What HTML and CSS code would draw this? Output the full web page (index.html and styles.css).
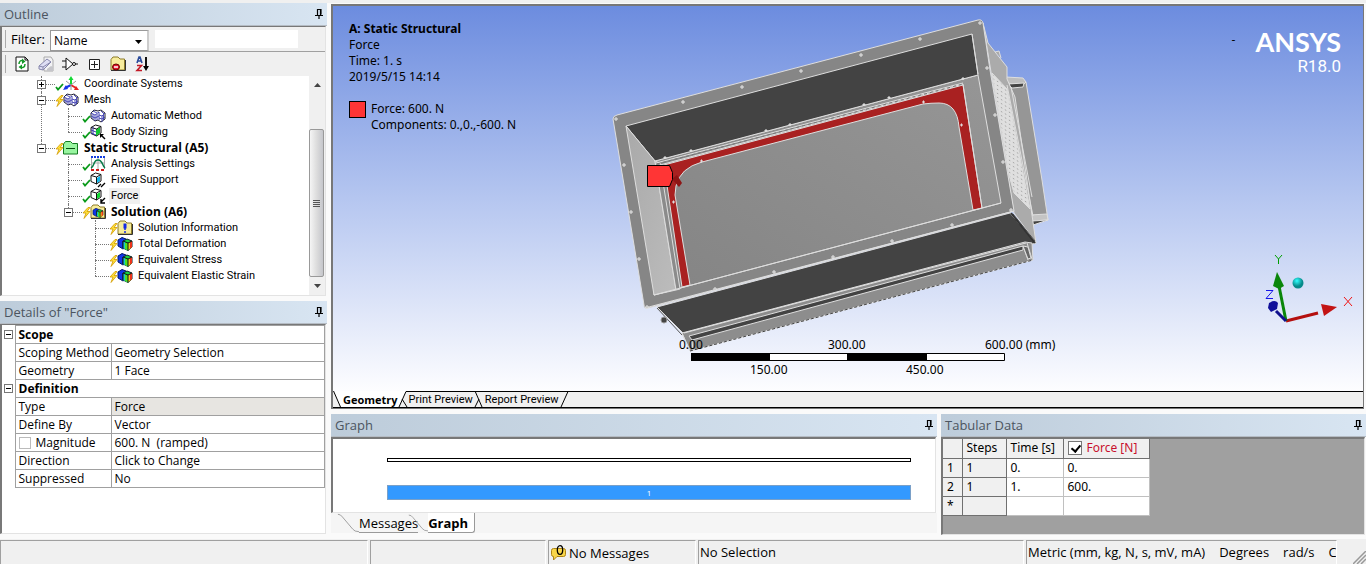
FILE: index.html
```
<!DOCTYPE html>
<html lang="en">
<head>
<meta charset="utf-8">
<title>Static Structural</title>
<link rel="stylesheet" href="styles.css">
</head>
<body>
<svg class="defs" aria-hidden="true">
  <defs>
    <symbol id="pin" viewBox="0 0 8 10"><path d="M2 .5h4v5M2.500 0v6M5.500 0v6M0 6.500h8M4 6v4" fill="none" stroke="#000" stroke-width="1.200"/></symbol>
    <symbol id="tick" viewBox="0 0 10 10"><path d="M1 6l2 2.500L8 3" fill="none" stroke="#0a9a1a" stroke-width="1.800"/></symbol>
    <symbol id="bolt" viewBox="0 0 9 12"><path d="M6 .5L1 6h3l-2 5.500L8 4.500H5L8 .5z" fill="#ffe23c" stroke="#d39a00" stroke-width=".8"/></symbol>
    <symbol id="folder" viewBox="0 0 16 15"><path d="M1 14V3.500L3 1h5l2 2h4.500v11z" fill="#f7ec9c" stroke="#8c7a28"/><path d="M1 14.500h14.500V4" fill="none" stroke="#333"/></symbol>
    <symbol id="cube" viewBox="0 0 12 13"><path d="M1 3.500L5.500 1 11 2.500v6.500L6.500 12 1 9.500z" fill="#fff" stroke="#111"/><path d="M1 3.500l5.500 1.500L11 2.500M6.500 5v7" fill="none" stroke="#111"/></symbol>
    <symbol id="meshcube" viewBox="0 0 16 14"><path d="M1 4l3-3 4 1 3-1 4 3v6l-4 3-3-2-3 1-4-3z" fill="#fff" stroke="#223"/><path d="M1 4l4 2 4-3M5 6v6M3 2l4 2M3 5v5M7 5v6M1 7l4 2 4-2M9 3v3l3 1 3-3M12 7v6M9 6v5M11 2l3 3M13.500 6v5M9 9l3 1 3-2" fill="none" stroke="#3a3ab0" stroke-width=".9"/></symbol>
    <symbol id="result" viewBox="0 0 16 14"><path d="M1 3l4-2.500L9 2v8l-3 2-5-3z" fill="#1236e8" stroke="#001a66"/><path d="M6 4l4-2 5 2v6l-4 3.500-5-2.500z" fill="#18d23c" stroke="#123"/><path d="M6 4l5 2v7.500L6 11z" fill="#12c8d8"/><path d="M8 5l3 1v7.500L8 12z" fill="#4de321"/><path d="M11 6l4-2v6l-4 3.500z" fill="#f4c81b"/><path d="M13 5l2-1v6l-2 1.500z" fill="#ef331b"/><path d="M6 4l5 2 4-2M11 6v7.500M6 4v7" fill="none" stroke="#111"/></symbol>
    <linearGradient id="plate" x1="0" y1="1" x2="1" y2="0"><stop offset="0" stop-color="#848484"/><stop offset="1" stop-color="#969696"/></linearGradient>
    <linearGradient id="wall" x1="0" y1="0" x2="1" y2="1"><stop offset="0" stop-color="#a9a9a9"/><stop offset="1" stop-color="#bcbcbc"/></linearGradient>
    <pattern id="holes" width="4" height="4" patternUnits="userSpaceOnUse" patternTransform="skewY(30)"><rect width="4" height="4" fill="#dfdfdf"/><path d="M1 1h1v1H1z" fill="#888"/></pattern>
    <radialGradient id="ball" cx=".4" cy=".3"><stop offset="0" stop-color="#3ff"/><stop offset="1" stop-color="#078a8a"/></radialGradient>
  </defs>
</svg>

<div class="app">
  <div class="topstrip"></div>
  <main class="workspace">
    <aside class="sidebar">
      <section class="pane outline">
        <header class="pane-title"><h2>Outline</h2><svg class="pin"><use href="#pin"/></svg></header>
        <div class="pane-body">
          <div class="filterbar">
            <span class="grip"></span>
            <label for="filter">Filter:</label>
            <div class="selectbox"><select id="filter"><option>Name</option></select><svg viewBox="0 0 7 4"><path d="M0 0h7L3.500 4z"/></svg></div>
            <input class="search" type="text" aria-label="Filter text">
          </div>
          <div class="toolbar">
            <span class="grip"></span>
            <button aria-label="Refresh"><svg viewBox="0 0 16 16"><path d="M2 1h9l3 3v11H2z" fill="#fff" stroke="#111"/><path d="M11 1v3h3" fill="none" stroke="#111"/><path d="M5 8c0-3 2-4 4-3M11 8c0 4-3 4-5 3" fill="none" stroke="#149a28" stroke-width="1.500"/><path d="M8 2.500l3.500 3L8 8zM8 8.500L4.500 11 8 13.500z" fill="#149a28"/></svg></button>
            <button aria-label="Erase"><svg viewBox="0 0 16 16"><path d="M6 1h7l2 3v11H6z" fill="#f2f2f4" stroke="#aaa"/><path d="M1 10l8-7 4 3-8 8-4-1z" fill="#dedef4" stroke="#8888ad"/><path d="M1 10l4 1 8-5M5 11v3" fill="none" stroke="#8888ad"/><path d="M9 13l4-3 2 1v4H9z" fill="#c5c5ca"/></svg></button>
            <button aria-label="Gate"><svg viewBox="0 0 16 16"><path d="M4 2v12l7-6zM0 5h4M0 11h4M13 8h3" fill="#fff" stroke="#111"/><circle cx="12" cy="8" r="1.500" fill="#fff" stroke="#111"/></svg></button>
            <button aria-label="Expand"><svg viewBox="0 0 16 16"><path d="M3.500 3.500h10v10h-10zM5 8.500h7M8.500 5v7" fill="#fff" stroke="#222"/></svg></button>
            <button aria-label="Hide folder"><svg viewBox="0 0 16 16"><use href="#folder" width="16" height="15"/><ellipse cx="6" cy="11" rx="3.500" ry="3" fill="#e5162c" stroke="#600"/><path d="M4 11h4" stroke="#fff" stroke-width="1.500"/></svg></button>
            <button aria-label="Sort"><svg viewBox="0 0 16 16"><path d="M3 7l2-6h1l2 6M4 5h3" fill="none" stroke="#2a4b9b" stroke-width="1.600"/><path d="M3 9.500h4.500L3 14.500h5" fill="none" stroke="#c21826" stroke-width="1.600"/><path d="M12 1v11" stroke="#111" stroke-width="2"/><path d="M9 10h6l-3 5z"/></svg></button>
          </div>
          <div class="treewrap">
            <ul class="tree">
              <li><div class="row"><i class="box plus"></i><svg class="ico"><use href="#tick" x="0" y="5" width="10" height="10"/><path d="M16 9V3" stroke="#13d835" stroke-width="2"/><path d="M13.500 4L16 0l2.500 4z" fill="#13d835"/><path d="M16 9l-6 3" stroke="#1534e8" stroke-width="2"/><path d="M8 14l3-5 2 4z" fill="#1534e8"/><path d="M16 9l5 3" stroke="#e82222" stroke-width="2"/><path d="M24 14l-5 0 2-4z" fill="#e82222"/><path d="M11 5l5 4 5-4M16 9v5" fill="none" stroke="#999"/></svg><span>Coordinate Systems</span></div></li>
              <li><div class="row"><i class="box"></i><svg class="ico"><use href="#meshcube" x="8" y="1" width="16" height="14"/><use href="#bolt" x="0" y="3" width="9" height="12"/></svg><span>Mesh</span></div>
                <ul>
                  <li><div class="row"><svg class="ico"><use href="#meshcube" x="8" y="1" width="16" height="14"/><use href="#tick" x="0" y="5" width="10" height="10"/></svg><span>Automatic Method</span></div></li>
                  <li><div class="row"><svg class="ico"><use href="#cube" x="8" y="0" width="12" height="13"/><path d="M14 6l4-3v6l-4 3z" fill="#12c832"/><path d="M9 6l5 2M11 3v7M9 9l5 2" stroke="#3a3ab0"/><path d="M23 15l-4-4" stroke="#000" stroke-width="1.500"/><path d="M18 10h4l-4 4z"/><use href="#tick" x="0" y="5" width="10" height="10"/></svg><span>Body Sizing</span></div></li>
                </ul></li>
              <li><div class="row"><i class="box"></i><svg class="ico"><path d="M8.500 14V4l2-2.500h5l2 2h5V14z" fill="#98f5a0" stroke="#137a20"/><path d="M11 8.500h9" stroke="#075010"/><use href="#bolt" x="0" y="3" width="9" height="12"/></svg><span class="bold">Static Structural (A5)</span></div>
                <ul>
                  <li><div class="row"><svg class="ico"><path d="M9.500 2v11M22.500 2v11M16 2v11M9 7h14" stroke="#aaa"/><path d="M9 12c4-2 2-8 7-8s4 6 7 8" fill="none" stroke="#087a48" stroke-width="1.500"/><path d="M9 1h14" stroke="#123be0" stroke-width="2" stroke-dasharray="2 1"/><path d="M9 14h14" stroke="#d01818" stroke-width="2" stroke-dasharray="3 2"/><use href="#tick" x="0" y="5" width="10" height="10"/></svg><span>Analysis Settings</span></div></li>
                  <li><div class="row"><svg class="ico"><use href="#cube" x="8" y="0" width="12" height="13"/><path d="M15 6l3-2v5l-3 2z" fill="#15b8ec"/><path d="M16 15l3-3M19 15l4-4" stroke="#000" stroke-width="1.300"/><use href="#tick" x="0" y="5" width="10" height="10"/></svg><span>Fixed Support</span></div></li>
                  <li><div class="row"><svg class="ico"><use href="#cube" x="8" y="0" width="12" height="13"/><path d="M15 6l3-2v5l-3 2z" fill="#12d832"/><path d="M23 10l-4 4M19 11v4h4" fill="none" stroke="#000" stroke-width="1.400"/><use href="#tick" x="0" y="5" width="10" height="10"/></svg><span class="selected">Force</span></div></li>
                  <li><div class="row"><i class="box"></i><svg class="ico"><use href="#folder" x="8" y="0" width="16" height="15"/><use href="#result" x="10" y="4" width="12" height="10"/><use href="#bolt" x="0" y="3" width="9" height="12"/></svg><span class="bold">Solution (A6)</span></div>
                    <ul>
                      <li><div class="row"><svg class="ico"><use href="#folder" x="8" y="0" width="16" height="15"/><path d="M16 3.500v5" stroke="#1329e6" stroke-width="3"/><path d="M16 8v2M16 11v2" stroke="#1329e6" stroke-width="1.500"/><use href="#bolt" x="0" y="3" width="9" height="12"/></svg><span>Solution Information</span></div></li>
                      <li><div class="row"><svg class="ico"><use href="#result" x="8" y="1" width="16" height="14"/><use href="#bolt" x="0" y="3" width="9" height="12"/></svg><span>Total Deformation</span></div></li>
                      <li><div class="row"><svg class="ico"><use href="#result" x="8" y="1" width="16" height="14"/><use href="#bolt" x="0" y="3" width="9" height="12"/></svg><span>Equivalent Stress</span></div></li>
                      <li><div class="row"><svg class="ico"><use href="#result" x="8" y="1" width="16" height="14"/><use href="#bolt" x="0" y="3" width="9" height="12"/></svg><span>Equivalent Elastic Strain</span></div></li>
                    </ul></li>
                </ul></li>
            </ul>
            <div class="scrollbar" aria-hidden="true">
              <svg class="arrow" viewBox="0 0 7 4"><path d="M0 4h7L3.500 0z"/></svg>
              <div class="track"><div class="thumb"><i></i><i></i><i></i><i></i></div></div>
              <svg class="arrow" viewBox="0 0 7 4"><path d="M0 0h7L3.500 4z"/></svg>
            </div>
          </div>
        </div>
      </section>

      <section class="pane details">
        <header class="pane-title"><h2>Details of "Force"</h2><svg class="pin"><use href="#pin"/></svg></header>
        <div class="pane-body">
          <table class="props">
            <colgroup><col class="c-gut"><col class="c-name"><col></colgroup>
            <tr><td class="gut"><i class="box"></i></td><th colspan="2">Scope</th></tr>
            <tr><td class="gut"></td><td>Scoping Method</td><td>Geometry Selection</td></tr>
            <tr><td class="gut"></td><td>Geometry</td><td>1 Face</td></tr>
            <tr><td class="gut"><i class="box"></i></td><th colspan="2">Definition</th></tr>
            <tr><td class="gut"></td><td>Type</td><td class="readonly">Force</td></tr>
            <tr><td class="gut"></td><td>Define By</td><td>Vector</td></tr>
            <tr><td class="gut"></td><td><label class="mag"><input type="checkbox">Magnitude</label></td><td>600. N&nbsp; (ramped)</td></tr>
            <tr><td class="gut"></td><td>Direction</td><td>Click to Change</td></tr>
            <tr><td class="gut"></td><td>Suppressed</td><td>No</td></tr>
          </table>
        </div>
      </section>
    </aside>

    <div class="content">
      <section class="viewer">
        <div class="viewport">
          <svg class="scene" viewBox="333 6 1030 385">
            <g stroke="#dedede" stroke-width="1" stroke-linejoin="round">
              <path d="M1006 79h17l3 3 16 98 6 40-16-2z" fill="#969696"/>
              <path d="M1006 77l17 1 3 4-3 3-16-2z" fill="#bdbdbd"/>
              <path d="M1008 84l16-1-1 4-11 1z" fill="#434343"/>
              <path d="M1030 215l17-1 1 6-17 1z" fill="#c4c4c4"/>
              <path d="M1032 221l16-1-15 5z" fill="#434343"/>
              <path d="M995 52l4-1 2 7" fill="#aaa"/>
              <path d="M983 23l5 20 19 24v12l8 18 21 146-22-30z" fill="#ababab"/>
              <path d="M992 73l15 16 23 120-16-16-5-18z" fill="url(#holes)"/>
              <path d="M1007 85l26 131M1011 87l21 110" fill="none"/>
              <path d="M657 307l353-94 26 30-13 4-336 90z" fill="#434343"/>
              <path d="M682 333l343-91 7 1 1 17-343 91z" fill="#8d8d8d"/>
              <path d="M689 336l334-90v4l-331 90z" fill="#434343"/>
              <path d="M684 333l151-40 191-50M682 334l8 16M692 340l1 11M1023 246l5 14M1027 243l5 16" fill="none"/>
              <path d="M1023 246l5 1 3 11-3 1z" fill="#666"/>
              <path d="M690 351l343-91" stroke="#444" stroke-dasharray="3 2" fill="none"/>
              <path d="M657 308l25 27M1013 214l22 27" stroke="#555" fill="none"/>
              <path d="M1011 213l24 30" stroke="#333" stroke-width="2"/>
              <path d="M613 119q0-3 4-4L978 20q4-1 5 3l7 47 24 141-366 97q-4 1-4-3z" fill="#868686"/>
              <path d="M655 161l323-86 23 128-347 92z" fill="url(#plate)"/>
              <path d="M626 126l346-92 6 41-323 86z" fill="#434343"/>
              <path d="M626 126l29 35 21 129-22 5z" fill="url(#wall)"/>
              <path d="M972 34l6 40" fill="none"/>
              <path d="M655 161l5 2 20 126-4 1z" fill="#8b8b8b"/>
              <path d="M664 165l299-80 19 123-9 2-14-83q-2-24-20-24-8 0-16 1l-221 58q-22 6-26 24l-1 9 15 90-8 2z" fill="#a92121"/>
              <path d="M656 163l307-80M660 165l303-81M963 84l19 124M654 295l347-92M645 308l369-97" fill="none"/>
              <path d="M657 164l306-80" stroke="#777" stroke-dasharray="3 3"/>
            </g>
            <g fill="#858585" stroke="#e8e8e8" stroke-width="1">
              <path d="M615 118h2v2h-2zM682 101h2v2h-2zM741 86h2v2h-2zM800 70h2v2h-2zM860 54h2v2h-2zM919 38h2v2h-2zM979 22h2v2h-2zM986 67h2v2h-2zM994 114h2v2h-2zM1002 161h2v2h-2zM1010 209h2v2h-2zM951 224h2v2h-2zM891 240h2v2h-2zM832 256h2v2h-2zM773 271h2v2h-2zM714 288h2v2h-2zM646 306h2v2h-2zM638 258h2v2h-2zM630 211h2v2h-2zM623 164h2v2h-2zM664 157h2v1h-2zM690 150h2v1h-2zM765 130h2v1h-2zM789 124h2v1h-2zM863 104h2v1h-2zM888 97h2v1h-2zM962 78h2v1h-2zM701 160h1v2h-1zM923 101h1v2h-1zM961 124h1v2h-1zM673 201h1v2h-1z"/>
            </g>
            <circle cx="664" cy="320" r="3" fill="#444" stroke="#999"/>
            <path d="M672 179l5-4 5 8-3 4z" fill="#8e1515"/>
            <path d="M647.500 165.500h22l3 7v7l-3 7h-22z" fill="#ff3535" stroke="#000"/>
            <g class="scale">
              <path d="M691.500 353.500h313v7h-313z" fill="#fff" stroke="#000"/>
              <path d="M691 353h79v8h-79zM847 353h80v8h-80z"/>
              <text x="679" y="349">0.00</text>
              <text x="828" y="349">300.00</text>
              <text x="985" y="349">600.00 (mm)</text>
              <text x="750" y="374">150.00</text>
              <text x="906" y="374">450.00</text>
            </g>
            <g fill="none">
              <path d="M1286 321L1318 313" stroke="#b40f0f" stroke-width="3"/>
              <path d="M1321 304l16 3-13 9z" fill="#c31414"/>
              <path d="M1286 321L1279 286" stroke="#0a860a" stroke-width="3"/>
              <path d="M1277 272l7 14-5 3-6-3z" fill="#0a860a"/>
              <path d="M1286 321L1276 311" stroke="#10108d" stroke-width="3"/>
              <path d="M1269 303q6-4 9 0l-1 6-6 3-3-4z" fill="#10109a"/>
              <circle cx="1298" cy="283" r="5.500" fill="url(#ball)"/>
              <path d="M1275 255l3.500 4 3.500-4M1278.500 259v5" stroke="#00a000"/>
              <path d="M1344 297l8 9M1352 297l-8 9" stroke="#f01515"/>
              <path d="M1266 290.500h7l-7 8h7" stroke="#1515e8"/>
            </g>
          </svg>
          <div class="annotation">
            <strong>A: Static Structural</strong>
            <span>Force</span>
            <span>Time: 1. s</span>
            <span>2019/5/15 14:14</span>
            <div class="legend"><i></i><p>Force: 600. N<br>Components: 0.,0.,-600. N</p></div>
          </div>
          <div class="brand"><span class="dash">-</span><div><b>ANSYS</b><small>R18.0</small></div></div>
        </div>
        <nav class="viewtabs">
          <svg class="slant start" viewBox="0 0 8 16"><path d="M0 0h.500L8 16H0z" fill="#f0f0f0"/><path d="M.500 0l7 16" stroke="#000" fill="none"/></svg>
          <button class="active">Geometry</button>
          <svg class="slant" viewBox="0 0 10 16"><path d="M0 0h8L1 16H0z" fill="#fff"/><path d="M1 16L8 .500h2M4 8l5 8" stroke="#000" fill="none"/></svg>
          <button>Print Preview</button>
          <svg class="slant" viewBox="0 0 10 16"><path d="M0 .500h10M1 0l7 16M1 16l4-8" stroke="#000" fill="none"/></svg>
          <button>Report Preview</button>
          <svg class="slant" viewBox="0 0 10 16"><path d="M1 16L8 .500M0 .500h10" stroke="#000" fill="none"/></svg>
          <span class="rest"></span>
        </nav>
      </section>

      <div class="lower">
        <section class="pane graph">
          <header class="pane-title"><h2>Graph</h2><svg class="pin"><use href="#pin"/></svg></header>
          <div class="pane-body">
            <div class="timeline"></div>
            <div class="step">1</div>
          </div>
          <nav class="doctabs">
            <svg class="edge" viewBox="0 0 24 20"><path d="M1 .500q3 0 5 3l11 13q2 3 7 3" fill="none" stroke="#999"/></svg>
            <button>Messages</button>
            <svg class="edge over" viewBox="0 0 24 20"><path d="M1 .500q3 0 5 3l11 13q2 3 7 3" fill="none" stroke="#999"/></svg>
            <button class="active">Graph</button>
          </nav>
        </section>
        <section class="pane tabular">
          <header class="pane-title"><h2>Tabular Data</h2><svg class="pin"><use href="#pin"/></svg></header>
          <div class="pane-body">
            <table class="data">
              <colgroup><col class="d-n"><col class="d-s"><col class="d-t"><col class="d-f"></colgroup>
              <tr><th></th><th>Steps</th><th>Time [s]</th><th><label class="force"><input type="checkbox" checked>Force [N]</label></th></tr>
              <tr><th>1</th><th>1</th><td>0.</td><td>0.</td></tr>
              <tr><th>2</th><th>1</th><td>1.</td><td>600.</td></tr>
              <tr><th class="star">*</th><th></th><td></td><td></td></tr>
            </table>
          </div>
        </section>
      </div>
    </div>
  </main>

  <footer class="status">
    <div class="s1"></div>
    <div class="s2"></div>
    <div class="s3"><svg viewBox="0 0 16 16"><path d="M1.500 5.500q0-2 2-2h10q2 0 2 2v4q0 2-2 2H7L3.500 15v-3.500q-2 0-2-2z" fill="#f8d64a" stroke="#ad8414"/><ellipse cx="10" cy="5" rx="2.700" ry="4.300" fill="none" stroke="#000" stroke-width="1.300"/></svg><span>No Messages</span></div>
    <div class="s4">No Selection</div>
    <div class="s5"><span>Metric (mm, kg, N, s, mV, mA)</span><span>Degrees</span><span>rad/s</span><span>C</span></div>
    <div class="s6"><svg viewBox="0 0 13 13"><path d="M0 13L13 0M4 13l9-9M8 13l5-5" stroke="#999" stroke-width="1.500"/></svg></div>
  </footer>
</div>
</body>
</html>
```
FILE: styles.css
```
* { box-sizing: border-box; }
body { margin: 0; font: 12px/16px "Open Sans", "Noto Sans", sans-serif; color: #000; background: #f5f5f5; }
h2, p, ul { margin: 0; padding: 0; }
button { border: 0; padding: 0; background: none; font: inherit; color: inherit; }
svg { display: block; }
.defs { position: absolute; width: 0; height: 0; }

.app { display: flex; flex-direction: column; min-height: 100vh; }
.topstrip { height: 3px; background: #f0f0f0; }
.workspace { flex: 1; display: flex; gap: 4px; background: #fafafa; }
.sidebar { width: 327px; display: flex; flex-direction: column; gap: 5px; padding-bottom: 5px; }
.content { flex: 1; min-width: 0; display: flex; flex-direction: column; gap: 5px; }

.pane { display: flex; flex-direction: column; }
.pane-title { height: 23px; display: flex; align-items: center; justify-content: space-between; padding: 0 4px; background: linear-gradient(90deg, #bdccda, #d8e5f2); border-bottom: 1px solid #b5bcc4; }
.pane-title h2 { font-size: 13px; font-weight: 400; color: #4c5560; }
.pin { width: 8px; height: 10px; }
.pane-body { flex: 1; background: #fff; border: 1px solid #e3e3e3; border-top: 2px solid #787878; border-left: 2px solid #787878; margin-right: 1px; }

.outline .pane-body { display: flex; flex-direction: column; border-top-width: 1px; }
.filterbar, .toolbar { display: flex; align-items: center; background: #f0f0f0; padding-left: 2px; }
.filterbar { height: 25px; border-bottom: 1px solid #a0a0a0; }
.grip { width: 2px; height: 18px; border-right: 1px solid #aaa; }
.filterbar label { margin-left: 5px; width: 39px; font-size: 13px; }
.selectbox { position: relative; width: 99px; height: 21px; background: #fff; border: 1px solid #999; border-right: 2px solid #ccc; align-self: flex-end; }
.selectbox select { width: 100%; height: 100%; border: 0; background: none; appearance: none; padding: 0 3px; font: inherit; }
.selectbox svg { position: absolute; right: 5px; top: 9px; width: 7px; height: 4px; pointer-events: none; }
.search { width: 143px; height: 18px; margin-left: 6px; border: 0; padding: 0 4px; font: inherit; }
.toolbar { height: 24px; }
.toolbar button { width: 16px; height: 16px; margin-left: 8px; }
.toolbar svg { width: 16px; height: 16px; }

.treewrap { flex: 1; display: flex; font-size: 11px; font-family: Roboto, "Open Sans", sans-serif; }
.tree { flex: 1; padding: 0 0 11px 35px; }
.tree ul { padding-left: 27px; }
.tree li { position: relative; list-style: none; }
.tree li::before { content: ""; position: absolute; left: 4px; top: 0; bottom: 0; border-left: 1px dotted #777; }
.tree li:last-child::before { bottom: auto; height: 8px; }
.row { position: relative; display: flex; align-items: center; height: 16px; padding-left: 4px; }
.row::before { content: ""; width: 14px; border-top: 1px dotted #777; }
.box { display: block; width: 9px; height: 9px; border: 1px solid #777; background: linear-gradient(#000, #000) center / 5px 1px no-repeat #fff; }
.box.plus { background: linear-gradient(#000, #000) center / 5px 1px no-repeat, linear-gradient(#000, #000) center / 1px 5px no-repeat #fff; }
.row .box { position: absolute; left: 0; top: 4px; }
.ico { width: 24px; height: 16px; }
.row span { margin-left: 3px; padding: 0 2px; white-space: nowrap; }
.row .bold { font-weight: 700; font-size: 12px; font-family: "Open Sans", sans-serif; }
.row .selected { background: #f0f0f0; }
.scrollbar { width: 16px; display: flex; flex-direction: column; background: #f0f0f0; }
.arrow { width: 7px; height: 4px; margin: 7px auto; fill: #444; }
.track { flex: 1; display: flex; padding-top: 35px; }
.thumb { width: 15px; border: 1px solid #999; border-radius: 2px; background: linear-gradient(90deg, #f5f5f5, #ddd 50%, #c5c6cb); display: flex; flex-direction: column; justify-content: center; align-items: center; gap: 1px; }
.thumb i { width: 7px; height: 1px; background: #555; }

.details { flex: 1; }
.details .pane-body { border-top-width: 1px; }
.props { border-collapse: collapse; table-layout: fixed; width: 100%; }
.c-gut { width: 13px; }
.c-name { width: 96px; }
.props td, .props th { height: 18px; padding: 0 3px; border: 1px solid #a0a0a0; line-height: 17px; text-align: left; white-space: nowrap; }
.props .gut { border-width: 0 1px 0 0; padding: 0 2px; }
.props .readonly { background: #e7e5e1; }
.mag { display: flex; align-items: center; gap: 5px; }
.mag input { appearance: none; width: 12px; height: 12px; margin: 0; border: 1px solid #bbb; background: #fff; }

.viewer { flex: 1; display: flex; flex-direction: column; border: 1px solid #777; border-width: 2px 1px 1px 2px; margin: 1px 2px 0 0; }
.viewport { position: relative; flex: 1; background: linear-gradient(#6c8cdf, #b5c6f0 50%, #fdfdff); }
.scene { position: absolute; inset: 0; width: 100%; height: 100%; }
.scale text, .annotation { font-size: 12px; font-family: "Noto Sans", sans-serif; }
.annotation { position: absolute; left: 16px; top: 15px; display: flex; flex-direction: column; }
.legend { display: flex; gap: 5px; margin-top: 16px; }
.legend i { width: 17px; height: 17px; border: 1px solid #000; background: #ff3535; }
.brand { position: absolute; right: 22px; top: 20px; display: flex; gap: 20px; }
.brand > div { display: flex; flex-direction: column; align-items: flex-end; color: #fff; }
.brand b { font: 700 27px/32px Lato, sans-serif; }
.brand small { font: 17px/16px Roboto, sans-serif; }
.dash { margin-top: 6px; }
.viewtabs { display: flex; height: 17px; background: #f0f0f0; border-bottom: 1px solid #000; }
.viewtabs button { font: 11px/16px Roboto, "Open Sans", sans-serif; border-top: 1px solid #000; padding: 0 1px; white-space: nowrap; }
.viewtabs .active { font: 700 11px/16px "Open Sans", sans-serif; padding: 0 0 0 2px; background: #fff; border-top-color: #fff; }
.slant { width: 10px; height: 16px; }
.slant.start { width: 8px; background: #fff; }
.rest { flex: 1; border-top: 1px solid #000; }

.lower { display: flex; gap: 4px; height: 125px; padding-bottom: 4px; }
.graph { flex: 606; }
.tabular { flex: 425; }
.graph .pane-body { flex: none; height: 76px; padding: 19px 24px 0 54px; }
.timeline { height: 4px; border: 1px solid #000; }
.step { margin-top: 23px; height: 15px; background: #3399ff; border: 1px solid #7aa0c8; color: #fff; font-size: 8px; line-height: 14px; text-align: center; }
.doctabs { display: flex; padding-left: 6px; background: #f5f5f5; height: 20px; font-size: 13px; line-height: 18px; }
.doctabs button { border-bottom: 1px solid #999; }
.edge { width: 22px; height: 20px; }
.edge.over { width: 20px; margin-left: -10px; }
.doctabs .active { font-weight: 700; background: #fff; border-right: 1px solid #999; padding-right: 6px; border-radius: 0 0 3px 0; }
.tabular .pane-body { background: #a0a0a0; }
.data { border-collapse: collapse; table-layout: fixed; width: 207px; font-family: "Noto Sans", sans-serif; }
.d-n { width: 19px; }
.d-s { width: 44px; }
.d-t { width: 57px; }
.data th, .data td { height: 19px; padding: 0 4px; text-align: left; font-weight: 400; white-space: nowrap; line-height: 18px; background: #fff; border: solid #c0c0c0; border-width: 0 1px 1px 0; }
.data th { background: #f0f0f0; border-color: #707070; }
.force { display: flex; align-items: center; gap: 5px; color: #c8102e; }
.force input { appearance: none; width: 14px; height: 14px; margin: 0; border: 1px solid #777; background: #fff; }
.force input:checked::after { content: ""; display: block; width: 4px; height: 7px; margin: 1px 0 0 4px; border: solid #000; border-width: 0 2px 2px 0; transform: rotate(40deg); }

.status { display: flex; gap: 2px; height: 25px; padding-top: 1px; background: #f0f0f0; font-size: 13px; line-height: 22px; white-space: nowrap; }
.status > div { min-width: 0; border-top: 1px solid #a0a0a0; border-left: 1px solid #a0a0a0; border-right: 1px solid #fff; padding: 0 1px; overflow: hidden; }
.status .s1 { flex: 368 1 368px; }
.status .s2 { flex: 176 1 176px; }
.status .s3 { flex: 148 1 148px; display: flex; align-items: center; gap: 3px; }
.s3 svg { width: 16px; height: 16px; }
.status .s4 { flex: 326 1 326px; }
.status .s5 { flex: 311 1 311px; display: flex; gap: 14px; }
.s5 span { flex: none; }
.status .s6 { flex: none; border: 0; width: 27px; display: flex; align-items: flex-end; justify-content: flex-end; padding: 0; }
.s6 svg { width: 13px; height: 13px; }
```
